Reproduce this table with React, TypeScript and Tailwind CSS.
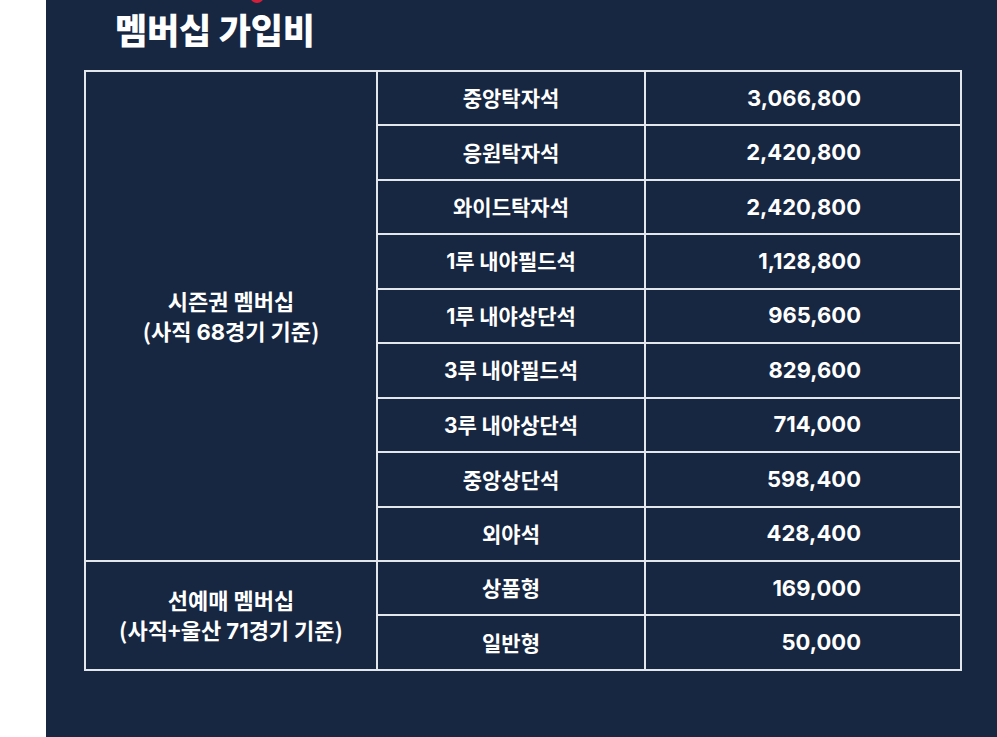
import React from "react";

const seasonRows: [string, string][] = [
  ["중앙탁자석", "3,066,800"],
  ["응원탁자석", "2,420,800"],
  ["와이드탁자석", "2,420,800"],
  ["1루 내야필드석", "1,128,800"],
  ["1루 내야상단석", "965,600"],
  ["3루 내야필드석", "829,600"],
  ["3루 내야상단석", "714,000"],
  ["중앙상단석", "598,400"],
  ["외야석", "428,400"],
];

const preRows: [string, string][] = [
  ["상품형", "169,000"],
  ["일반형", "50,000"],
];

function Mixed({ text }: { text: string }) {
  return (
    <>
      {text.split(/(\d+)/).map((p, k) =>
        /\d/.test(p) ? (
          <span key={k} className="font-['Inter','Noto_Sans_CJK_KR',sans-serif]">
            {p}
          </span>
        ) : (
          <span key={k}>{p}</span>
        )
      )}
    </>
  );
}

const cell =
  "border-2 border-[#e3e6eb] text-white font-bold h-[54.45px] p-0 align-middle";
const groupCell = cell + " text-center text-[22px] leading-[30px]";
const nameCell = cell + " text-center text-[21px]";
const priceCell =
  cell +
  " text-right text-[22px] pr-[99px] font-['Inter','Noto_Sans_CJK_KR',sans-serif]";

export default function App() {
  return (
    <div className="flex w-[997px] h-[737px] overflow-hidden font-['Noto_Sans_CJK_KR','Noto_Sans',sans-serif]">
      <div className="w-[46px] h-full bg-white shrink-0" />
      <div className="relative flex-1 h-full bg-[#172741] flex flex-col">
        <div className="absolute left-[204px] top-[-11px] w-[14px] h-[14px] rounded-full bg-[#d41f3a]" />
        <h1 className="ml-[69px] mt-[6px] h-[46px] text-[35px] leading-[46px] font-black text-white tracking-[-0.2px]">
          멤버십 가입비
        </h1>
        <table className="ml-[38px] mt-[18px] w-[876px] border-collapse table-fixed">
          <colgroup>
            <col className="w-[292px]" />
            <col className="w-[268px]" />
            <col className="w-[316px]" />
          </colgroup>
          <tbody>
            {seasonRows.map(([name, price], i) => (
              <tr key={name}>
                {i === 0 && (
                  <td rowSpan={9} className={groupCell}>
                    <div>시즌권 멤버십</div>
                    <div>
                      <Mixed text="(사직 68경기 기준)" />
                    </div>
                  </td>
                )}
                <td className={nameCell}>
                  <Mixed text={name} />
                </td>
                <td className={priceCell}>{price}</td>
              </tr>
            ))}
            {preRows.map(([name, price], i) => (
              <tr key={name}>
                {i === 0 && (
                  <td rowSpan={2} className={groupCell}>
                    <div>선예매 멤버십</div>
                    <div>
                      <Mixed text="(사직+울산 71경기 기준)" />
                    </div>
                  </td>
                )}
                <td className={nameCell}>{name}</td>
                <td className={priceCell}>{price}</td>
              </tr>
            ))}
          </tbody>
        </table>
      </div>
    </div>
  );
}
